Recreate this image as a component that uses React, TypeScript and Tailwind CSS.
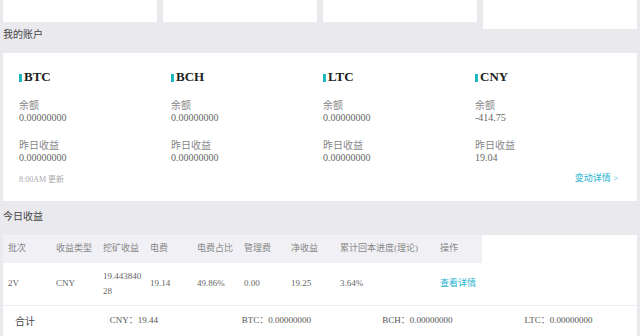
import React from "react";

const serif = { fontFamily: '"Liberation Serif", "Noto Sans CJK SC", serif' };

const accounts = [
  { name: "BTC", bal: "0.00000000", y: "0.00000000" },
  { name: "BCH", bal: "0.00000000", y: "0.00000000" },
  { name: "LTC", bal: "0.00000000", y: "0.00000000" },
  { name: "CNY", bal: "-414.75", y: "19.04" },
];

const cols = [
  { h: "批次", w: "w-[48px]" },
  { h: "收益类型", w: "w-[47px]" },
  { h: "挖矿收益", w: "w-[47px]" },
  { h: "电费", w: "w-[47px]" },
  { h: "电费占比", w: "w-[47px]" },
  { h: "管理费", w: "w-[47px]" },
  { h: "净收益", w: "w-[49px]" },
  { h: "累计回本进度(理论)", w: "w-[100px]" },
  { h: "操作", w: "w-[42px]" },
];

export default function App() {
  return (
    <div
      className="w-[640px] h-[336px] overflow-hidden bg-[#e9e9ee] px-[3px] text-[#666]"
      style={serif}
    >
      <div className="flex items-start gap-[6px]">
        <div className="w-[154px] h-[22px] bg-white" />
        <div className="w-[154px] h-[22px] bg-white" />
        <div className="w-[154px] h-[22px] bg-white" />
        <div className="w-[154px] h-[29px] bg-white" />
      </div>
      <div className="h-[24px] text-[10px] leading-[12px] text-[#444]">我的账户</div>
      <div className="h-[148px] bg-white pl-[16px] pt-[16px] pr-[19px]">
        <div className="flex">
          {accounts.map((a) => (
            <div key={a.name} className="w-[152px] shrink-0">
              <div className="flex items-end h-[16px]">
                <span className="w-[3px] h-[8px] bg-[#1db9c3] mb-[3px] mr-[2px]" />
                <span className="text-[13px] leading-[16px] font-bold text-[#222]">{a.name}</span>
              </div>
              <div className="mt-[15px] text-[10px] leading-[12px] text-[#888]">余额</div>
              <div className="text-[10px] leading-[11px] text-[#666]">{a.bal}</div>
              <div className="mt-[17px] text-[10px] leading-[12px] text-[#888]">昨日收益</div>
              <div className="text-[10px] leading-[11px] text-[#666]">{a.y}</div>
            </div>
          ))}
        </div>
        <div className="mt-[11px] flex justify-between items-center h-[11px]">
          <span className="text-[8px] leading-[11px] text-[#aaa]">8:00AM 更新</span>
          <span className="text-[9px] leading-[11px] text-[#27b3cf] mt-[-3px]">变动详情 &gt;</span>
        </div>
      </div>
      <div className="h-[34px] pt-[10px] text-[10px] leading-[12px] text-[#444]">今日收益</div>
      <div className="bg-white h-[120px]">
        <div className="flex w-[479px] h-[28px] items-center bg-[#f1f1f5] pl-[5px] text-[9px] text-[#888]">
          {cols.map((c) => (
            <div key={c.h} className={`${c.w} shrink-0`}>
              {c.h}
            </div>
          ))}
        </div>
        <div className="flex h-[43px] items-center pl-[5px] text-[9px] text-[#666] border-b border-[#ececf0]">
          <div className="w-[48px] shrink-0">2V</div>
          <div className="w-[47px] shrink-0">CNY</div>
          <div className="w-[47px] shrink-0 leading-[15px]">
            19.443840
            <br />
            28
          </div>
          <div className="w-[47px] shrink-0">19.14</div>
          <div className="w-[47px] shrink-0">49.86%</div>
          <div className="w-[47px] shrink-0">0.00</div>
          <div className="w-[49px] shrink-0">19.25</div>
          <div className="w-[100px] shrink-0">3.64%</div>
          <div className="w-[42px] shrink-0 text-[#27b3cf]">查看详情</div>
        </div>
        <div className="flex h-[30px] items-center text-[9px] text-[#555]">
          <div className="w-[59px] shrink-0 pl-[12px] text-[10px] text-[#444]">合计</div>
          <div className="w-[144px] shrink-0 text-center">CNY：19.44</div>
          <div className="w-[141px] shrink-0 text-center">BTC：0.00000000</div>
          <div className="w-[141px] shrink-0 text-center">BCH：0.00000000</div>
          <div className="w-[141px] shrink-0 text-center">LTC：0.00000000</div>
        </div>
      </div>
    </div>
  );
}
